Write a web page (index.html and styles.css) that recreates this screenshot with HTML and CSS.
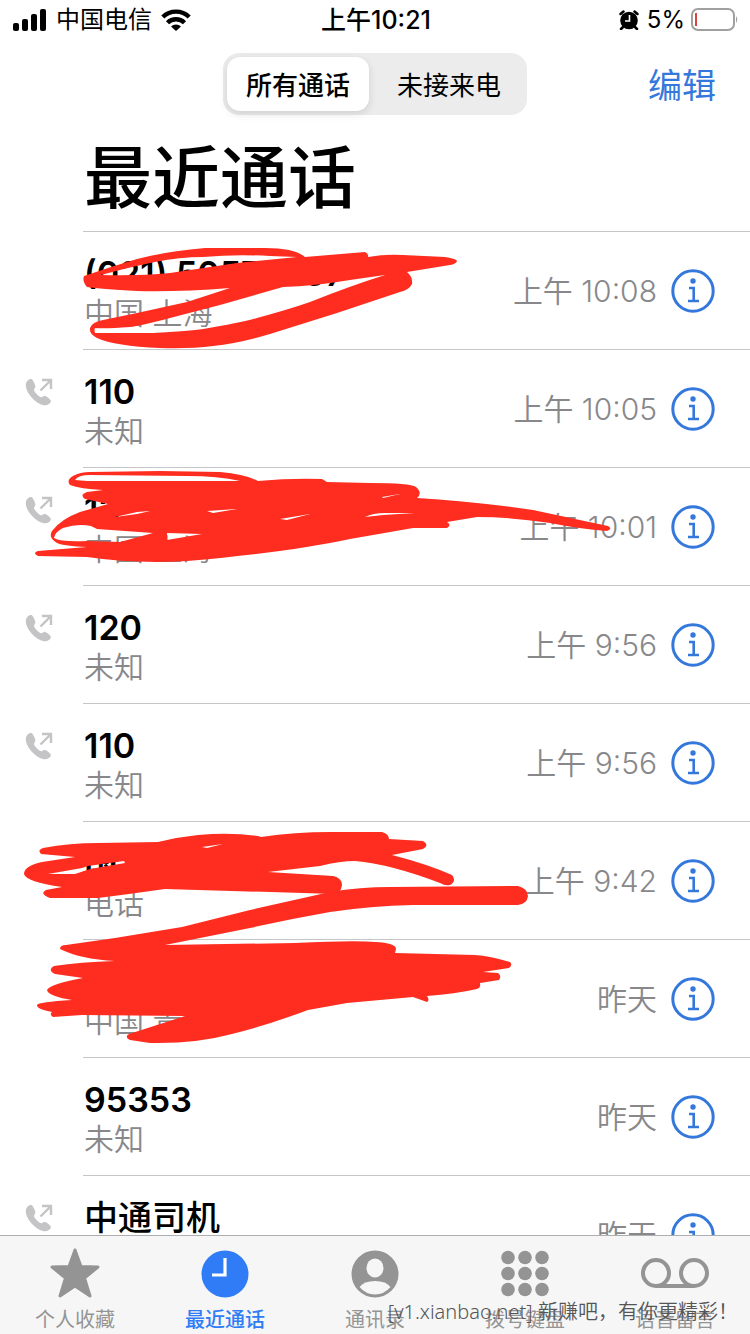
FILE: index.html
```html
<!DOCTYPE html>
<html lang="zh-CN">
  <head>
    <meta charset="UTF-8" />
    <meta name="viewport" content="width=device-width, initial-scale=1.0" />
    <title>最近通话</title>
    <link rel="stylesheet" href="styles.css">
  </head>
  <body>
    <!-- shared icons -->
    <svg class="sprite" aria-hidden="true">
      <symbol id="icon-outgoing" viewBox="0 0 28 28">
        <path d="M6.500 1C4 .5 1 3 .8 7c0 4.500 3 10 7.500 14.200C12 24.800 17 27.600 21 27.200c3-.3 5.200-2.600 4.800-4.400-.3-1.300-4-4.600-5.600-4.900-1.500-.3-2.800 1.500-4.200 1.300-1.800-.3-6.500-5-6.900-6.800-.3-1.500 1.400-2.800 1.300-4.400C10 6 7.800 1.500 6.500 1z" fill="#c4c4c6"/>
        <path d="M15.500 12.500 25.500 2.500M17 2h9v9" fill="none" stroke="#c4c4c6" stroke-width="2.400"/>
      </symbol>
      <symbol id="icon-info" viewBox="0 0 44 44">
        <circle cx="22" cy="22" r="20.200" fill="none" stroke="#3478dc" stroke-width="3"/>
        <circle cx="22" cy="12" r="2.700" fill="#3478dc"/>
        <path d="M18 19h4.700v13M17 32h11" fill="none" stroke="#3478dc" stroke-width="2.600"/>
      </symbol>
    </svg>

    <header class="status-bar">
      <div class="status-left">
        <svg class="signal" viewBox="0 0 34 22" aria-hidden="true">
          <rect x="0" y="14" width="6" height="8" rx="2"/>
          <rect x="9" y="10" width="6" height="12" rx="2"/>
          <rect x="18" y="5" width="6" height="17" rx="2"/>
          <rect x="27" y="0" width="6" height="22" rx="2"/>
        </svg>
        <span>中国电信</span>
        <svg class="wifi" viewBox="0 0 30 22" aria-hidden="true">
          <path d="M1.800 8a19 19 0 0 1 26.400 0M6.500 13.800a12 12 0 0 1 17 0" fill="none" stroke="#000" stroke-width="4.400"/>
          <path d="M15 22l-5-4.500a7.500 7.500 0 0 1 10 0z"/>
        </svg>
      </div>
      <div class="status-time">上午10:21</div>
      <div class="status-right">
        <svg class="alarm" viewBox="0 0 20 20" aria-hidden="true">
          <circle cx="10" cy="10.500" r="8.800"/>
          <path d="M1.500 4 4.500 1.500M18.500 4 15.500 1.500M4 17l-2 2M16 17l2 2" stroke="#000" stroke-width="2.500" stroke-linecap="round"/>
          <path d="M10.500 5v6H6" fill="none" stroke="#fff" stroke-width="1.600"/>
        </svg>
        <span>5%</span>
        <svg class="battery" viewBox="0 0 48 24" aria-hidden="true">
          <rect x="1" y="1" width="42" height="21" rx="6" fill="none" stroke="#a0a09e" stroke-width="2"/>
          <rect x="4" y="5" width="2" height="13" fill="#d8453c"/>
          <path d="M45 8q2.500 3.500 0 7z" fill="#a0a09e"/>
        </svg>
      </div>
    </header>

    <div class="nav">
      <div class="segmented">
        <button class="segment active">所有通话</button>
        <button class="segment">未接来电</button>
      </div>
      <button class="edit">编辑</button>
    </div>

    <h1>最近通话</h1>

    <main class="calls">
      <ul>
        <li class="call">
          <div class="direction"></div>
          <div class="info">
            <div class="who"><div class="name">(021) 5057 &nbsp; &nbsp; 67</div><div class="place">中国 上海</div></div>
            <time>上午 10:08</time>
            <button class="detail" aria-label="详情"><svg><use href="#icon-info"/></svg></button>
          </div>
        </li>
        <li class="call">
          <div class="direction"><svg><use href="#icon-outgoing"/></svg></div>
          <div class="info">
            <div class="who"><div class="name">110</div><div class="place">未知</div></div>
            <time>上午 10:05</time>
            <button class="detail" aria-label="详情"><svg><use href="#icon-info"/></svg></button>
          </div>
        </li>
        <li class="call">
          <div class="direction"><svg><use href="#icon-outgoing"/></svg></div>
          <div class="info">
            <div class="who"><div class="name">13</div><div class="place">中国 上海</div></div>
            <time>上午 10:01</time>
            <button class="detail" aria-label="详情"><svg><use href="#icon-info"/></svg></button>
          </div>
        </li>
        <li class="call">
          <div class="direction"><svg><use href="#icon-outgoing"/></svg></div>
          <div class="info">
            <div class="who"><div class="name">120</div><div class="place">未知</div></div>
            <time>上午 9:56</time>
            <button class="detail" aria-label="详情"><svg><use href="#icon-info"/></svg></button>
          </div>
        </li>
        <li class="call">
          <div class="direction"><svg><use href="#icon-outgoing"/></svg></div>
          <div class="info">
            <div class="who"><div class="name">110</div><div class="place">未知</div></div>
            <time>上午 9:56</time>
            <button class="detail" aria-label="详情"><svg><use href="#icon-info"/></svg></button>
          </div>
        </li>
        <li class="call">
          <div class="direction"></div>
          <div class="info">
            <div class="who"><div class="name">国</div><div class="place">电话</div></div>
            <time>上午 9:42</time>
            <button class="detail" aria-label="详情"><svg><use href="#icon-info"/></svg></button>
          </div>
        </li>
        <li class="call">
          <div class="direction"></div>
          <div class="info">
            <div class="who"><div class="name">&nbsp;</div><div class="place">中国 青</div></div>
            <time>昨天</time>
            <button class="detail" aria-label="详情"><svg><use href="#icon-info"/></svg></button>
          </div>
        </li>
        <li class="call">
          <div class="direction"></div>
          <div class="info">
            <div class="who"><div class="name">95353</div><div class="place">未知</div></div>
            <time>昨天</time>
            <button class="detail" aria-label="详情"><svg><use href="#icon-info"/></svg></button>
          </div>
        </li>
        <li class="call">
          <div class="direction"><svg><use href="#icon-outgoing"/></svg></div>
          <div class="info">
            <div class="who"><div class="name contact">中通司机</div><div class="place">&nbsp;</div></div>
            <time>昨天</time>
            <button class="detail" aria-label="详情"><svg><use href="#icon-info"/></svg></button>
          </div>
        </li>
      </ul>

      <!-- red marker over the private numbers -->
      <svg class="marker" viewBox="0 231 750 1004" aria-hidden="true">
        <path d="M84 276Q110 267 137 259Q168 251 205 248L265 248Q295 248 305 257L365 252Q369 254 368 257Q385 254 403 255L445 257Q457 259 457 261Q456 264 450 265L407 272Q413 277 412 284Q409 290 400 292L337 313L270 334Q240 343 213 346Q190 349 160 348Q115 346 97 338Q89 334 90 328Q92 322 103 320L137 313L187 302L230 288Q180 292 137 291Q100 289 87 287Q82 281 84 276z
          M101 275Q130 267 155 262Q180 257 203 257Q235 254 270 256L297 257L237 263L170 273Q140 276 101 275z
          M95 328Q94 330 95 333L153 333Q190 331 203 329Q240 323 257 318Q290 309 310 302Q350 286 385 275L350 280Q315 286 283 287L220 305L170 318Q140 326 130 327Q105 329 95 328z"/>
        <path d="M70 485Q66 480 73 476Q80 472 90 472L160 471L220 472Q245 474 258 481Q290 478 322 479L327 482L370 483Q410 483 416 487Q423 493 417 498Q470 501 533 510Q575 519 608 526Q613 529 607 531Q580 529 550 523Q510 517 477 517L447 522Q452 525 447 528L413 528L350 539Q290 552 187 561Q135 564 87 557L38 556Q32 553 38 551L87 547Q64 546 57 543Q48 538 52 531Q61 519 80 512L108 504L85 499Q79 495 87 492L103 490Q80 489 70 485z
          M75 480Q78 475 90 475L187 476Q218 476 240 481L87 481z
          M54 538Q55 532 63 528Q78 523 91 526L97 529L153 533L120 542L87 541Q60 542 54 538z
          M167 533L202 534L167 540z
          M115 517L137 512L150 511L137 514z
          M207 511L237 509L213 513z
          M280 519L310 514L287 520z
          M365 517Q373 513 385 513L415 513L383 515z
          M382 497L400 494L383 498z"/>
        <path d="M41 854Q37 850 43 848Q70 843 98 843L158 842Q178 837 198 835Q230 832 258 836L261 837Q295 832 330 832L382 832Q389 834 389 839L423 841Q430 845 423 849L392 855Q427 864 452 875Q457 881 450 885Q445 886 440 883Q390 864 355 861Q340 861 320 866L268 872L333 876Q342 878 342 885Q341 893 335 894L165 889Q130 894 98 898L50 898Q39 894 46 890L62 887Q26 882 24 874Q24 866 42 862L75 857z
          M48 874L82 868L88 866L124 861L125 863L90 869L75 874z
          M202 847L223 844L207 848z"/>
        <path d="M60 949Q60 945 66 945L115 938L182 927L250 910L330 892Q360 887 390 887L518 886Q527 888 528 896Q527 904 518 905L413 905Q370 906 330 912Q290 919 250 928L165 945L295 943Q355 940 375 942Q396 943 396 949L395 953L475 955Q490 956 510 962Q513 965 509 968L483 972L498 973Q502 976 499 980L480 983Q481 988 477 989Q455 994 427 996Q430 1000 427 1002L413 997L347 1003L308 1010Q265 1026 232 1034Q195 1044 150 1043L130 1040Q124 1037 129 1034L185 1016L82 1015L53 1017Q49 1014 52 1012Q36 1009 37 1005Q38 1002 72 1000Q48 996 47 990Q50 984 83 978L55 974Q47 970 54 966Q80 962 115 961Q80 959 60 949z"/>
      </svg>
    </main>

    <nav class="tabs">
      <a class="tab" href="#">
        <svg viewBox="0 0 50 50"><path d="M25 2 31 18.500 48 19 34.500 30 40 48 25 38 10 48 15.500 30 2 19 19 18.500z" stroke="currentColor" stroke-width="3" stroke-linejoin="round"/></svg>
        <span>个人收藏</span>
      </a>
      <a class="tab active" href="#">
        <svg viewBox="0 0 50 50"><circle cx="25" cy="26" r="23.500"/><path d="M25 10v17H12" fill="none" stroke="#fff" stroke-width="3.200"/></svg>
        <span>最近通话</span>
      </a>
      <a class="tab" href="#">
        <svg viewBox="0 0 50 50"><circle cx="25" cy="26" r="23.500"/><ellipse cx="25" cy="20" rx="8.500" ry="9.500" fill="#f6f6f6"/><path d="M9.500 39Q14 33 25 33t15.500 6Q34 46.500 25 46.500T9.500 39z" fill="#f6f6f6"/></svg>
        <span>通讯录</span>
      </a>
      <a class="tab" href="#">
        <svg viewBox="0 0 50 50">
          <circle cx="8" cy="9.500" r="6.800"/><circle cx="25" cy="9.500" r="6.800"/><circle cx="42" cy="9.500" r="6.800"/>
          <circle cx="8" cy="25.500" r="6.800"/><circle cx="25" cy="25.500" r="6.800"/><circle cx="42" cy="25.500" r="6.800"/>
          <circle cx="8" cy="41.500" r="6.800"/><circle cx="25" cy="41.500" r="6.800"/><circle cx="42" cy="41.500" r="6.800"/>
        </svg>
        <span>拨号键盘</span>
      </a>
      <a class="tab" href="#">
        <svg class="wide" viewBox="0 0 70 50"><g fill="none" stroke="currentColor" stroke-width="4"><circle cx="16" cy="25" r="13"/><circle cx="54" cy="25" r="13"/><path d="M16 38h38"/></g></svg>
        <span>语音留言</span>
      </a>
    </nav>

    <p class="watermark">[v1.xianbao.net] 新赚吧，有你更精彩！</p>
  </body>
</html>
```
FILE: styles.css
```css
* {
  box-sizing: border-box;
}
body {
  position: relative;
  display: flex;
  flex-direction: column;
  height: 100vh;
  margin: 0;
  background: #fff;
  color: #000;
  font-family: Inter, "Noto Sans CJK SC", sans-serif;
  overflow: hidden;
}
button {
  padding: 0;
  border: none;
  background: none;
  color: inherit;
  font-family: inherit;
  cursor: pointer;
}
svg {
  display: block;
  flex: none;
}
.sprite {
  position: absolute;
  width: 0;
  height: 0;
}

/* status bar */
.status-bar {
  display: grid;
  grid-template-columns: 1fr auto 1fr;
  align-items: center;
  height: 40px;
  padding: 0 11px 0 13px;
  font-size: 24px;
  line-height: 40px;
}
.status-left,
.status-right {
  display: flex;
  align-items: center;
  gap: 9px;
}
.status-right {
  justify-content: flex-end;
  gap: 6px;
}
.status-time {
  font-size: 25px;
  font-weight: 500;
}
.signal {
  width: 34px;
  height: 22px;
}
.wifi {
  width: 30px;
  height: 22px;
}
.alarm {
  width: 20px;
  height: 20px;
  margin-right: 2px;
}
.battery {
  width: 48px;
  height: 24px;
}

/* navigation */
.nav {
  display: grid;
  grid-template-columns: 1fr auto 1fr;
  align-items: center;
  padding: 13px 34px 0;
}
.segmented {
  grid-column: 2;
  display: grid;
  grid-template-columns: 1fr 1fr;
  width: 304px;
  height: 62px;
  padding: 4px;
  border-radius: 16px;
  background: #ececed;
}
.segment {
  padding-bottom: 2px;
  border-radius: 13px;
  font-size: 26px;
}
.segment.active {
  margin-right: 6px;
  background: #fff;
  box-shadow: 0 3px 8px rgba(0, 0, 0, 0.12);
  font-weight: 500;
}
.edit {
  justify-self: end;
  padding-top: 4px;
  color: #3478dc;
  font-size: 34px;
  line-height: 58px;
}
h1 {
  margin: 0;
  padding: 22px 84px 12px;
  font-size: 68px;
  font-weight: 500;
  line-height: 82px;
}

/* call list */
.calls {
  position: relative;
  flex: 1;
  min-height: 0;
  overflow: hidden;
}
.calls ul {
  margin: 0;
  padding: 0;
  list-style: none;
}
.call {
  display: flex;
  height: 118px;
}
.direction {
  width: 83px;
  padding: 29px 0 0 25px;
}
.direction svg {
  width: 28px;
  height: 28px;
}
.info {
  flex: 1;
  display: flex;
  align-items: center;
  padding: 0 35px 0 1px;
  border-top: 1px solid #c6c6c8;
}
.who {
  flex: 1;
  padding-top: 6px;
}
.name {
  font-size: 34px;
  font-weight: 600;
  line-height: 38px;
}
.name.contact {
  font-weight: 500;
}
.place,
.call time {
  color: #88888b;
  font-size: 30px;
  font-weight: 350;
  line-height: 40px;
}
.detail {
  margin-left: 14px;
}
.detail svg {
  width: 44px;
  height: 44px;
}
.marker {
  position: absolute;
  top: 0;
  left: 0;
  width: 100%;
  fill: #ff2d20;
  fill-rule: evenodd;
  pointer-events: none;
}

/* tab bar */
.tabs {
  display: grid;
  grid-template-columns: repeat(5, 1fr);
  height: 99px;
  border-top: 1px solid #aeaeb0;
  background: #f6f6f6;
}
.tab {
  display: flex;
  flex-direction: column;
  align-items: center;
  gap: 10px;
  padding-top: 12px;
  color: #949494;
  font-size: 20px;
  line-height: 24px;
  text-decoration: none;
}
.tab.active {
  color: #2f7cf6;
  font-weight: 500;
}
.tab svg {
  width: 50px;
  height: 50px;
  fill: currentColor;
}
.tab svg.wide {
  width: 70px;
}
.watermark {
  position: absolute;
  right: 12px;
  bottom: 8px;
  margin: 0;
  color: #555;
  font-family: "Noto Sans", "Noto Sans CJK SC", sans-serif;
  font-size: 20px;
  font-weight: 350;
  line-height: 28px;
}
```
